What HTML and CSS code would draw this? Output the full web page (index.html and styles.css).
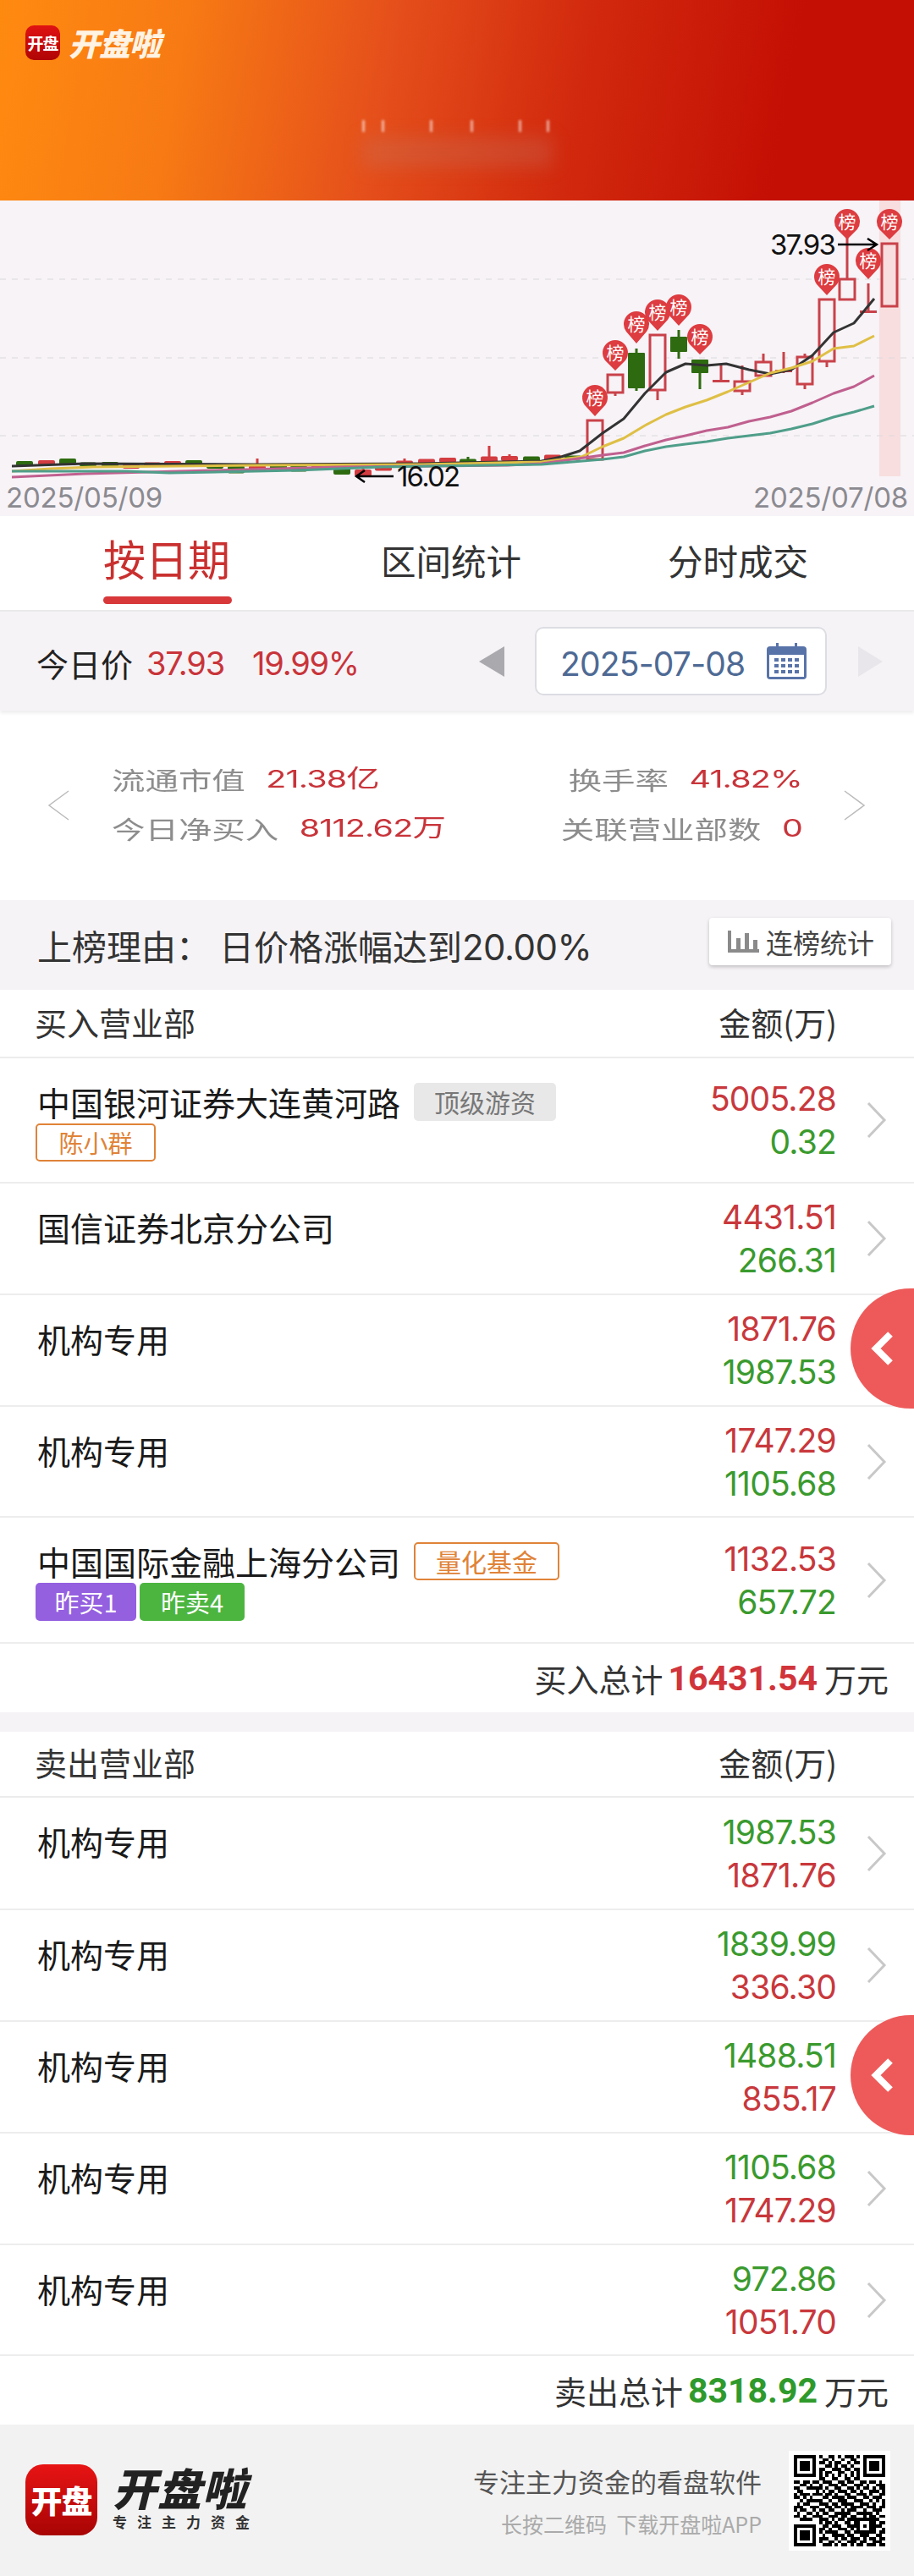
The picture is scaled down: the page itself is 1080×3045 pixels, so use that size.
FILE: index.html
```html
<!DOCTYPE html>
<html lang="zh-CN">
<head>
    <meta charset="UTF-8">
    <meta name="viewport" content="width=device-width, initial-scale=1.0">
    <title>开盘啦</title>
    <link rel="stylesheet" href="styles.css">
</head>
<body>

<div class="page">
    <header class="hero">
        <div class="hero-logo">
            <div class="hero-icon">开盘</div>
            <div class="hero-word">开盘啦</div>
        </div>
        <div class="hero-title">
            <div class="hero-sparks"><i></i><i></i><i></i><i></i><i></i><i></i></div>
            <div class="hero-blur"></div>
        </div>
    </header>

    <section class="chart">
        <svg id="kline" class="kline" viewBox="0 237 1080 333" width="1080" height="333"></svg>
        <div class="chart-dates">
            <span>2025/05/09</span>
            <span>2025/07/08</span>
        </div>
    </section>

    <nav class="tabs">
        <div class="tab tab-active">按日期</div>
        <div class="tab">区间统计</div>
        <div class="tab">分时成交</div>
    </nav>

    <section class="price-bar">
        <div class="price-label">今日价</div>
        <div class="price-num price-close">37.93</div>
        <div class="price-num price-pct">19.99%</div>
        <div class="tri tri-left"></div>
        <div class="date-box">
            <span class="date-text">2025-07-08</span>
            <svg class="cal" width="47" height="43" viewBox="0 0 47 43">
                <path d="M4 4h39a4 4 0 0 1 4 4v31a4 4 0 0 1-4 4H4a4 4 0 0 1-4-4V8a4 4 0 0 1 4-4z" fill="#5873a8"/>
                <rect x="3" y="14" width="41" height="26" fill="#fff"/>
                <rect x="11" y="0" width="3" height="10" fill="#5873a8"/>
                <rect x="33" y="0" width="3" height="10" fill="#5873a8"/>
                <g fill="#5873a8">
                    <rect x="9" y="18" width="5" height="4"/><rect x="17" y="18" width="5" height="4"/><rect x="25" y="18" width="5" height="4"/><rect x="33" y="18" width="5" height="4"/>
                    <rect x="9" y="25" width="5" height="4"/><rect x="17" y="25" width="5" height="4"/><rect x="25" y="25" width="5" height="4"/><rect x="33" y="25" width="5" height="4"/>
                    <rect x="9" y="32" width="5" height="4"/><rect x="17" y="32" width="5" height="4"/><rect x="25" y="32" width="5" height="4"/><rect x="33" y="32" width="5" height="4"/>
                </g>
            </svg>
        </div>
        <div class="tri tri-right"></div>
    </section>

    <section class="stats">
        <svg class="stats-arrow" width="26" height="36" viewBox="0 0 26 36"><path d="M25 1L2 18l23 17" fill="none" stroke="#bbb" stroke-width="1.5"/></svg>
        <div class="stats-inner">
            <div class="stat-row">
                <div class="stat"><span class="stat-label">流通市值</span><span class="stat-value">21.38亿</span></div>
                <div class="stat"><span class="stat-label">换手率</span><span class="stat-value">41.82%</span></div>
            </div>
            <div class="stat-row">
                <div class="stat"><span class="stat-label">今日净买入</span><span class="stat-value">8112.62万</span></div>
                <div class="stat"><span class="stat-label">关联营业部数</span><span class="stat-value">0</span></div>
            </div>
        </div>
        <svg class="stats-arrow stats-arrow-right" width="26" height="36" viewBox="0 0 26 36"><path d="M1 1l23 17L1 35" fill="none" stroke="#bbb" stroke-width="1.5"/></svg>
    </section>

    <section class="reason">
        <div class="reason-text">上榜理由<span class="reason-colon">：</span>日价格涨幅达到<span class="reason-num">20.00%</span></div>
        <div class="reason-btn">
            <svg width="37" height="26" viewBox="0 0 37 26">
                <path d="M0 0h4v26H0zM0 22h37v4H0zM10 9h5v13h-5zM20 3h5v19h-5zM30 11h5v11h-5z" fill="#8a8a8a"/>
            </svg>
            <span>连榜统计</span>
        </div>
    </section>

    <section class="board">
        <div class="board-head"><span>买入营业部</span><span class="board-amount">金额(万)</span></div>

        <div class="row row-tall">
            <div class="row-main">
                <div class="row-name">中国银河证券大连黄河路<span class="tag tag-gray">顶级游资</span></div>
                <div class="row-tags"><span class="tag tag-orange">陈小群</span></div>
            </div>
            <div class="row-vals"><div class="red">5005.28</div><div class="green">0.32</div></div>
            <svg class="row-arrow" width="24" height="44" viewBox="0 0 24 44"><path d="M2 2l19 20L2 42" fill="none" stroke="#c8c8c8" stroke-width="3"/></svg>
        </div>
        <div class="row">
            <div class="row-main"><div class="row-name">国信证券北京分公司</div></div>
            <div class="row-vals"><div class="red">4431.51</div><div class="green">266.31</div></div>
            <svg class="row-arrow" width="24" height="44" viewBox="0 0 24 44"><path d="M2 2l19 20L2 42" fill="none" stroke="#c8c8c8" stroke-width="3"/></svg>
        </div>
        <div class="row">
            <div class="row-main"><div class="row-name">机构专用</div></div>
            <div class="row-vals"><div class="red">1871.76</div><div class="green">1987.53</div></div>
            <svg class="row-arrow" width="24" height="44" viewBox="0 0 24 44"><path d="M2 2l19 20L2 42" fill="none" stroke="#c8c8c8" stroke-width="3"/></svg>
            <div class="float-btn"><svg width="34" height="42" viewBox="0 0 34 42"><path d="M26 4L9 21l17 17" fill="none" stroke="#fff" stroke-width="8"/></svg></div>
        </div>
        <div class="row row-short">
            <div class="row-main"><div class="row-name">机构专用</div></div>
            <div class="row-vals"><div class="red">1747.29</div><div class="green">1105.68</div></div>
            <svg class="row-arrow" width="24" height="44" viewBox="0 0 24 44"><path d="M2 2l19 20L2 42" fill="none" stroke="#c8c8c8" stroke-width="3"/></svg>
        </div>
        <div class="row row-tag2">
            <div class="row-main">
                <div class="row-name">中国国际金融上海分公司<span class="tag tag-orange tag-fund">量化基金</span></div>
                <div class="row-tags"><span class="tag tag-purple">昨买1</span><span class="tag tag-green">昨卖4</span></div>
            </div>
            <div class="row-vals"><div class="red">1132.53</div><div class="green">657.72</div></div>
            <svg class="row-arrow" width="24" height="44" viewBox="0 0 24 44"><path d="M2 2l19 20L2 42" fill="none" stroke="#c8c8c8" stroke-width="3"/></svg>
        </div>
        <div class="total">买入总计<b class="total-red">16431.54</b>万元</div>
    </section>

    <div class="gap"></div>

    <section class="board">
        <div class="board-head board-head-sell"><span>卖出营业部</span><span class="board-amount">金额(万)</span></div>

        <div class="row row-long">
            <div class="row-main"><div class="row-name">机构专用</div></div>
            <div class="row-vals"><div class="green">1987.53</div><div class="red">1871.76</div></div>
            <svg class="row-arrow" width="24" height="44" viewBox="0 0 24 44"><path d="M2 2l19 20L2 42" fill="none" stroke="#c8c8c8" stroke-width="3"/></svg>
        </div>
        <div class="row">
            <div class="row-main"><div class="row-name">机构专用</div></div>
            <div class="row-vals"><div class="green">1839.99</div><div class="red">336.30</div></div>
            <svg class="row-arrow" width="24" height="44" viewBox="0 0 24 44"><path d="M2 2l19 20L2 42" fill="none" stroke="#c8c8c8" stroke-width="3"/></svg>
        </div>
        <div class="row">
            <div class="row-main"><div class="row-name">机构专用</div></div>
            <div class="row-vals"><div class="green">1488.51</div><div class="red">855.17</div></div>
            <svg class="row-arrow" width="24" height="44" viewBox="0 0 24 44"><path d="M2 2l19 20L2 42" fill="none" stroke="#c8c8c8" stroke-width="3"/></svg>
            <div class="float-btn"><svg width="34" height="42" viewBox="0 0 34 42"><path d="M26 4L9 21l17 17" fill="none" stroke="#fff" stroke-width="8"/></svg></div>
        </div>
        <div class="row">
            <div class="row-main"><div class="row-name">机构专用</div></div>
            <div class="row-vals"><div class="green">1105.68</div><div class="red">1747.29</div></div>
            <svg class="row-arrow" width="24" height="44" viewBox="0 0 24 44"><path d="M2 2l19 20L2 42" fill="none" stroke="#c8c8c8" stroke-width="3"/></svg>
        </div>
        <div class="row row-short">
            <div class="row-main"><div class="row-name">机构专用</div></div>
            <div class="row-vals"><div class="green">972.86</div><div class="red">1051.70</div></div>
            <svg class="row-arrow" width="24" height="44" viewBox="0 0 24 44"><path d="M2 2l19 20L2 42" fill="none" stroke="#c8c8c8" stroke-width="3"/></svg>
        </div>
        <div class="total">卖出总计<b class="total-green">8318.92</b>万元</div>
    </section>

    <footer class="footer">
        <div class="footer-icon">开盘</div>
        <div class="footer-brand">
            <div class="footer-word">开盘啦</div>
            <div class="footer-slogan">专注主力资金</div>
        </div>
        <div class="footer-copy">
            <div class="footer-line1">专注主力资金的看盘软件</div>
            <div class="footer-line2">长按二维码&nbsp;&nbsp;下载开盘啦APP</div>
        </div>
        <div class="qr"><svg id="qr" width="108" height="108" viewBox="0 0 29 29" shape-rendering="crispEdges"></svg></div>
    </footer>
</div>

<script src="script.js"></script>
</body>
</html>
```

FILE: styles.css
```css
* {
    box-sizing: border-box;
}

body {
    margin: 0;
    background: #fff;
    font-family: "Noto Sans CJK SC", sans-serif;
    color: #222;
}

.page {
    width: 1080px;
    height: 3045px;
    overflow: hidden;
}

/* top banner */
.hero {
    height: 237px;
    padding: 30px 0 0 30px;
    position: relative;
    background: linear-gradient(100deg, #ff8a10 0%, #f77a14 20%, #e54f1b 42%, #d22a0e 62%, #c40f04 85%);
}

.hero-logo {
    display: flex;
    align-items: center;
    gap: 10px;
}

.hero-icon {
    width: 41px;
    height: 41px;
    border-radius: 10px;
    background: linear-gradient(180deg, #e01212, #b00505);
    color: #fff;
    font-size: 19px;
    font-weight: 700;
    line-height: 41px;
    text-align: center;
    white-space: nowrap;
    letter-spacing: -1px;
}

.hero-word {
    color: #fff3e4;
    font-size: 37px;
    font-weight: 900;
    font-style: italic;
    line-height: 41px;
    letter-spacing: -1px;
}

.hero-title {
    position: absolute;
    left: 428px;
    top: 142px;
    width: 225px;
    height: 56px;
}

.hero-sparks {
    display: flex;
}

.hero-sparks i {
    width: 3px;
    height: 14px;
    background: rgba(255, 255, 255, 0.6);
    filter: blur(1.5px);
}

.hero-sparks i:nth-child(2) {
    margin-left: 20px;
}

.hero-sparks i:nth-child(3) {
    margin-left: 54px;
}

.hero-sparks i:nth-child(4) {
    margin-left: 45px;
}

.hero-sparks i:nth-child(5) {
    margin-left: 54px;
}

.hero-sparks i:nth-child(6) {
    margin-left: 30px;
}

.hero-blur {
    height: 36px;
    margin-top: 6px;
    background: rgba(190, 120, 100, 0.28);
    filter: blur(10px);
}

/* k line */
.chart {
    height: 373px;
    background: #f7f3f7;
}

.kline {
    display: block;
    overflow: visible;
}

.chart-dates {
    height: 40px;
    padding: 0 7px;
    display: flex;
    justify-content: space-between;
    font-family: Inter, sans-serif;
    font-size: 33px;
    line-height: 36px;
    color: #8b8a90;
    letter-spacing: -0.2px;
}

/* tabs */
.tabs {
    height: 113px;
    padding-left: 30px;
    display: grid;
    grid-template-columns: 334px 338px 340px;
    border-bottom: 2px solid #e9e9ea;
}

.tab {
    text-align: center;
    font-size: 41.5px;
    line-height: 42px;
    padding-top: 31px;
    color: #333;
    position: relative;
}

.tab-active {
    font-size: 50px;
    line-height: 50px;
    padding-top: 24px;
    color: #c9302f;
}

.tab-active::after {
    content: "";
    position: absolute;
    left: 92px;
    bottom: 7px;
    width: 152px;
    height: 9px;
    border-radius: 5px;
    background: #d8383a;
}

/* price */
.price-bar {
    height: 117px;
    padding-left: 43px;
    display: flex;
    align-items: center;
    background: #f6f3f6;
    box-shadow: 0 3px 4px rgba(0, 0, 0, 0.07);
    position: relative;
}

.price-label {
    font-size: 38px;
    color: #222;
    width: 130px;
    position: relative;
    top: 2px;
}

.price-num {
    font-family: Inter, sans-serif;
    font-size: 38px;
    color: #c8343a;
    letter-spacing: -1.2px;
    position: relative;
    top: 2px;
}

.price-close {
    width: 125px;
}

.price-pct {
    width: 268px;
}

.tri {
    width: 0;
    height: 0;
    border-top: 18px solid transparent;
    border-bottom: 18px solid transparent;
}

.tri-left {
    border-right: 30px solid #a9a9ae;
}

.date-box {
    width: 345px;
    height: 81px;
    margin-left: 36px;
    padding: 0 22px 0 28px;
    border: 2px solid #dcdde3;
    border-radius: 10px;
    background: #fff;
    display: flex;
    align-items: center;
    justify-content: space-between;
}

.date-text {
    font-family: Inter, sans-serif;
    font-size: 39px;
    color: #4e6a94;
    letter-spacing: -0.8px;
    position: relative;
    top: 3px;
}

.tri-right {
    margin-left: 37px;
    border-left: 29px solid #e8e6ea;
}

/* stats */
.stats {
    height: 224px;
    padding: 0 57px 0 56px;
    display: flex;
    align-items: center;
}

.stats-inner {
    flex: none;
    width: 600px;
    margin-left: 50px;
    transform: scaleX(1.36);
    transform-origin: left center;
    display: flex;
    flex-direction: column;
    gap: 20px;
    position: relative;
    top: -2px;
}

.stats-arrow-right {
    margin-left: auto;
    position: relative;
    z-index: 1;
}

.stat-row {
    display: flex;
    justify-content: space-between;
}

.stat {
    display: flex;
    gap: 18px;
    line-height: 38px;
    font-size: 29px;
}

.stat-label {
    color: #8d8d8d;
}

.stat-value {
    color: #c8343a;
    font-family: Inter, "Noto Sans CJK SC", sans-serif;
    font-size: 29px;
    letter-spacing: -0.6px;
}

/* reason */
.reason {
    height: 106px;
    padding: 0 27px 0 44px;
    display: flex;
    align-items: center;
    justify-content: space-between;
    background: #f6f3f6;
}

.reason-text {
    font-size: 41px;
    color: #333;
    white-space: nowrap;
    position: relative;
}

.reason-colon {
    margin-right: 10px;
}

.reason-num {
    font-family: Inter, sans-serif;
    font-size: 42px;
    letter-spacing: -0.5px;
}

.reason-btn {
    width: 215px;
    height: 56px;
    padding-left: 22px;
    display: flex;
    align-items: center;
    gap: 8px;
    background: #fff;
    border-radius: 4px;
    box-shadow: 0 2px 4px rgba(0, 0, 0, 0.22);
    font-size: 32px;
    color: #444;
    position: relative;
    top: -4px;
}

/* list */
.board-head {
    height: 81px;
    padding: 0 91px 5px 41px;
    display: flex;
    justify-content: space-between;
    align-items: center;
    border-bottom: 2px solid #ececec;
    font-size: 38px;
    color: #333;
}

.board-head-sell {
    height: 78px;
}

.row {
    height: 132px;
    padding: 26px 32px 0 44px;
    border-bottom: 2px solid #ededed;
    display: flex;
    position: relative;
}

.row-tall {
    height: 148px;
}

.row-tag2 {
    height: 149px;
}

.row-short {
    height: 131px;
}

.row-long {
    height: 133px;
}

.row-main {
    flex: 1;
}

.row-name {
    font-size: 39px;
    line-height: 50px;
    color: #1a1a1a;
    display: flex;
    align-items: center;
    white-space: nowrap;
}

.row-tags {
    display: flex;
    gap: 4px;
    margin-top: 1px;
    margin-left: -2px;
}

.row-vals {
    position: absolute;
    right: 92px;
    top: 0;
    bottom: 0;
    display: flex;
    flex-direction: column;
    justify-content: center;
    align-items: flex-end;
    font-family: Inter, sans-serif;
    font-size: 39px;
    line-height: 51px;
    letter-spacing: -0.8px;
}

.red {
    color: #c8383c;
}

.green {
    color: #3a9a2e;
}

.row-arrow {
    position: absolute;
    right: 32px;
    top: 50%;
    margin-top: -22px;
}

.tag {
    display: inline-block;
    height: 45px;
    padding: 0 14px;
    border-radius: 5px;
    font-size: 29px;
    line-height: 45px;
    white-space: nowrap;
}

.tag-gray {
    margin-left: 16px;
    width: 168px;
    padding: 0;
    text-align: center;
    background: #e8e8e8;
    color: #777;
    font-size: 30px;
}

.tag-orange {
    border: 2px solid #e08338;
    color: #e08338;
    line-height: 41px;
    width: 142px;
    padding: 0;
    text-align: center;
}

.tag-fund {
    width: 172px;
    margin-left: 16px;
    font-size: 30px;
}

.tag-purple {
    width: 119px;
    padding: 0;
    text-align: center;
    background: #9460e0;
    color: #fff;
}

.tag-green {
    width: 124px;
    padding: 0;
    text-align: center;
    background: #4cb540;
    color: #fff;
}

.float-btn {
    position: absolute;
    top: 50%;
    margin-top: -73px;
    right: 0;
    width: 75px;
    height: 142px;
    border-radius: 71px 0 0 71px;
    background: #ee5a5a;
    display: flex;
    align-items: center;
    padding-left: 21px;
}

.total {
    height: 81px;
    padding-right: 30px;
    display: flex;
    justify-content: flex-end;
    align-items: center;
    font-size: 38px;
    color: #333;
    white-space: nowrap;
}

.total b {
    margin: 0 8px 0 6px;
    font-family: Roboto, sans-serif;
    font-size: 41px;
    font-weight: 700;
}

.total-red {
    color: #d1343a;
}

.total-green {
    color: #2f9a2c;
}

.gap {
    height: 23px;
    background: #f6f3f6;
}

/* footer */
.footer {
    height: 179px;
    padding: 47px 28px 0 30px;
    background: #f2f2f2;
    display: flex;
    position: relative;
}

.footer-icon {
    width: 85px;
    height: 84px;
    border-radius: 21px;
    background: linear-gradient(180deg, #e81414, #a80404);
    color: #fff;
    font-size: 37px;
    font-weight: 900;
    line-height: 84px;
    text-align: center;
    white-space: nowrap;
    letter-spacing: -1px;
}

.footer-brand {
    margin-left: 18px;
    margin-top: -1px;
}

.footer-word {
    font-size: 52px;
    font-weight: 900;
    font-style: italic;
    line-height: 56px;
    color: #222;
    letter-spacing: 1px;
    white-space: nowrap;
}

.footer-slogan {
    font-size: 17px;
    font-weight: 700;
    line-height: 20px;
    letter-spacing: 12px;
    color: #333;
    white-space: nowrap;
    margin-top: 3px;
}

.footer-copy {
    margin-left: auto;
    margin-right: 152px;
    text-align: right;
}

.footer-line1 {
    font-size: 31px;
    line-height: 40px;
    color: #555;
    white-space: nowrap;
}

.footer-line2 {
    font-size: 25px;
    line-height: 34px;
    margin-top: 13px;
    color: #aaa;
    white-space: nowrap;
}

.qr {
    position: absolute;
    left: 932px;
    top: 31px;
    width: 120px;
    height: 118px;
    padding: 5px 6px;
    background: #fff;
}

.qr svg {
    display: block;
}
```

FILE: script.js
```js
// candle data: x, body top, body bottom, wick top, wick bottom, up?
const RED = '#c9424a';
const GREEN = '#2e6b10';

// flat candles of the first two months: x, y centre, height, up?
const small = [
    [29, 548, 6, 0], [55, 547, 6, 1], [80, 546, 8, 0], [104, 549, 5, 0], [130, 549, 6, 0],
    [155, 551, 6, 1], [180, 549, 5, 1], [204, 548, 6, 1], [229, 548, 8, 0], [254, 551, 6, 0],
    [279, 555, 9, 0], [304, 554, 8, 1], [329, 552, 6, 0], [353, 554, 7, 0], [378, 552, 7, 1],
    [404, 555, 12, 0], [429, 559, 8, 1], [453, 553, 7, 1], [478, 548, 7, 1], [504, 546, 7, 1],
    [529, 544, 6, 1], [553, 545, 5, 0], [578, 543, 7, 1], [602, 542, 6, 1], [628, 544, 9, 0],
    [653, 542, 9, 1], [677, 541, 5, 0]
];

const wicks = { 304: [542], 429: [552], 478: [542], 553: [540], 578: [527], 602: [537] };

const candles = [
    [703, 497, 543, 497, 543, 1],
    [727, 443, 464, 443, 468, 1],
    [752, 417, 459, 412, 462, 0],
    [777, 396, 461, 396, 473, 1],
    [802, 398, 416, 390, 424, 0],
    [827, 425, 441, 425, 460, 0],
    [852, 449, 451, 432, 451, 1],
    [877, 451, 462, 432, 467, 1],
    [902, 428, 444, 418, 444, 1],
    [926, 437, 441, 416, 441, 1],
    [951, 422, 454, 418, 460, 1],
    [977, 354, 427, 354, 434, 1],
    [1001, 330, 354, 280, 354, 1],
    [1026, 367, 369, 335, 369, 1],
    [1051, 288, 362, 288, 362, 1]
];

const pins = [
    [703, 470, 492], [727, 417, 438], [752, 383, 406], [777, 369, 391], [802, 363, 385],
    [827, 398, 419], [977, 327, 349], [1001, 262, 283], [1026, 308, 330], [1051, 262, 283]
];

const lines = [
    ['#333', 3, '14,551 100,548 300,549 500,548 640,545 663,540 685,533 712,512 737,495 762,465 787,440 810,430 835,432 858,430 885,437 910,442 935,437 960,420 985,393 1009,382 1033,353'],
    ['#dfbf45', 3, '14,557 60,554 110,552 300,550 500,549 640,546 687,540 712,528 737,518 762,503 787,490 810,481 835,473 860,463 885,452 910,441 935,435 960,427 985,412 1009,409 1033,397'],
    ['#c0608f', 3, '14,564 100,560 250,556 400,552 600,550 640,548 712,538 737,535 762,527 787,520 810,515 835,509 860,505 885,498 910,493 935,486 960,476 985,465 1009,457 1033,444'],
    ['#4f9e8a', 3, '14,557 150,557 200,559 350,556 450,552 640,549 712,543 737,540 762,533 787,528 810,525 835,522 860,518 885,515 910,512 935,507 960,501 985,493 1009,487 1033,480']
];

function drawChart() {
    let s = '<rect x="1039" y="237" width="25" height="326" fill="#f8dedf"/>';

    [330, 423, 515].forEach(y => {
        s += `<line x1="0" x2="1080" y1="${y}" y2="${y}" stroke="#dcdadc" stroke-width="1" stroke-dasharray="7 7"/>`;
    });

    small.forEach(([x, y, h, up]) => {
        const c = up ? '#d33c40' : GREEN;
        if (wicks[x]) {
            s += `<line x1="${x}" x2="${x}" y1="${wicks[x][0]}" y2="${y}" stroke="${c}" stroke-width="3"/>`;
        }
        s += `<rect x="${x - 10}" y="${y - h / 2}" width="20" height="${h}" rx="2" fill="${c}"/>`;
    });

    candles.forEach(([x, top, bottom, wickTop, wickBottom, up]) => {
        const c = up ? RED : GREEN;
        s += `<line x1="${x}" x2="${x}" y1="${wickTop}" y2="${wickBottom}" stroke="${c}" stroke-width="3"/>`;
        if (bottom - top < 5) {
            s += `<rect x="${x - 10}" y="${top}" width="20" height="3" fill="${c}"/>`;
        } else if (up) {
            const fill = x === 1051 ? '#f8dedf' : '#f7f3f7';
            s += `<rect x="${x - 9}" y="${top}" width="18" height="${bottom - top}" fill="${fill}" stroke="${c}" stroke-width="3"/>`;
        } else {
            s += `<rect x="${x - 10}" y="${top}" width="20" height="${bottom - top}" rx="1" fill="${c}"/>`;
        }
    });

    lines.forEach(([color, width, points]) => {
        s += `<polyline points="${points}" fill="none" stroke="${color}" stroke-width="${width}" stroke-linejoin="round"/>`;
    });

    pins.forEach(([x, y, tip]) => {
        s += `<path d="M${x} ${tip}L${x - 12} ${y + 9}A15 15 0 1 1 ${x + 12} ${y + 9}Z" fill="#dd3c40"/>`;
        s += `<text x="${x}" y="${y + 8}" text-anchor="middle" font-size="21" fill="#fff" font-family="Noto Sans CJK SC">榜</text>`;
    });

    // high and low marks
    s += '<text x="910" y="301" font-size="33" fill="#111" font-family="Inter" letter-spacing="-1.8">37.93</text>';
    s += '<path d="M990 289H1035M1025 282l11 7l-11 7" fill="none" stroke="#000" stroke-width="2.5"/>';
    s += '<text x="469" y="575" font-size="33" fill="#111" font-family="Inter" letter-spacing="-1.8">16.02</text>';
    s += '<path d="M465 563H421M431 556l-10 7l10 7" fill="none" stroke="#000" stroke-width="2.5"/>';

    document.getElementById('kline').innerHTML = s;
}

const qrRows = [
    '11111110100110101110101111111',
    '10000010011010010011001000001',
    '10111010110101100101101011101',
    '10111010001101011010001011101',
    '10111010110011101101101011101',
    '10000010101100110010101000001',
    '11111110101010101010101111111',
    '00000000110011001101100000000',
    '11011011011100110110011011010',
    '00110100100111011001110100111',
    '11001111101001100110101101011',
    '01100001010110111011010011101',
    '10111011101101001100111010011',
    '11010100011011110111001101110',
    '00101111100100111001110010101',
    '01011000111011011110011101001',
    '11100111001101101011110111011',
    '10110010110110010111001001110',
    '01001101011001111100111110100',
    '11010011100111011011001011011',
    '00111100111010110111111111100',
    '00000000101101001101100011011',
    '11111110011011100111101011110',
    '10000010110100111010100011001',
    '10111010101111001101111111011',
    '10111010010011110110011100110',
    '10111010111001011011101011011',
    '10000010100110100111011001110',
    '11111110011101011010110111011'
];

function drawQr() {
    let d = '';
    qrRows.forEach((row, y) => {
        for (let x = 0; x < row.length; x++) {
            if (row[x] === '1') d += `M${x} ${y}h1v1h-1z`;
        }
    });
    document.getElementById('qr').innerHTML = `<path d="${d}" fill="#000"/>`;
}

drawChart();
drawQr();
```
